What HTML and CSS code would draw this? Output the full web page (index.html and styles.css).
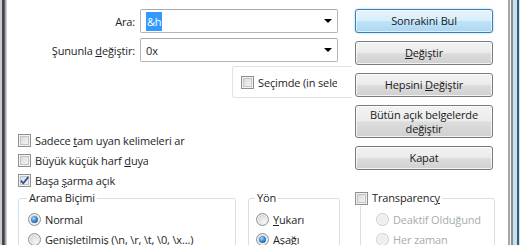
FILE: index.html
```html
<!DOCTYPE html>
<html>
<head>
<meta charset="utf-8">
<link rel="stylesheet" href="styles.css">
</head>
<body>
<div class="window">
  <div class="frame-left"></div>
  <div class="client">
    <div class="top">
      <div class="fields">
        <div class="field-row">
          <span class="lbl">Ara:</span>
          <div class="combo"><span class="val"><span class="sel">&amp;h</span></span><span class="arrow"></span></div>
        </div>
        <div class="field-row second">
          <span class="lbl">Şununla <u>d</u>eğiştir:</span>
          <div class="combo"><span class="val">0x</span><span class="arrow"></span></div>
        </div>
        <div class="selbox">
          <span class="cb"></span><span class="clip clip-sel">Seçimde (in selection)</span>
        </div>
        <div class="checks">
          <div class="check"><span class="cb"></span><span class="clip clip-1">Sadece <u>t</u>am uyan kelimeleri ara</span></div>
          <div class="check"><span class="cb"></span><span class="clip clip-2">Büyük küçük harf <u>d</u>uyarlı</span></div>
          <div class="check"><span class="cb checked"><svg width="11" height="11" viewBox="0 0 11 11"><path d="M1.8 5.6 L4.3 8.3 L9.4 1.9" fill="none" stroke="#2f4f8f" stroke-width="1.7"/></svg></span><span class="txt">Başa <u>ş</u>arma açık</span></div>
        </div>
      </div>
      <div class="buttons">
        <div class="btn default"><span>Sonrakini Bul</span></div>
        <div class="btn"><span><u>D</u>eğiştir</span></div>
        <div class="btn"><span>Hepsini <u>D</u>eğiştir</span></div>
        <div class="btn tall"><span>Bütün açık belgelerde<br>değiştir</span></div>
        <div class="btn"><span>Kapat</span></div>
      </div>
    </div>
    <div class="groups">
      <fieldset class="grp grp-mode">
        <legend>Arama Biçimi</legend>
        <div class="radio-row"><span class="rd on"></span><span>Normal</span></div>
        <div class="radio-row"><span class="rd"></span><span>Genişletilmiş (\n, \r, \t, \0, \x...)</span></div>
      </fieldset>
      <fieldset class="grp grp-dir">
        <legend>Yön</legend>
        <div class="radio-row"><span class="rd"></span><span><u>Y</u>ukarı</span></div>
        <div class="radio-row"><span class="rd on"></span><span>Aşağı</span></div>
      </fieldset>
      <fieldset class="grp grp-tr">
        <legend><span class="cb"></span><span>Transparenc<u>y</u></span></legend>
        <div class="radio-row dis"><span class="rd"></span><span class="clip clip-3">Deaktif Olduğunda</span></div>
        <div class="radio-row dis"><span class="rd"></span><span>Her zaman</span></div>
      </fieldset>
    </div>
  </div>
  <div class="frame-right"></div>
</div>
</body>
</html>
```
FILE: styles.css
```css
html, body {
  margin: 0;
  padding: 0;
  background: #ffffff;
}
body {
  width: 520px;
  height: 245px;
  overflow: hidden;
  font-family: "Open Sans", "Noto Sans", sans-serif;
  font-size: 11px;
  letter-spacing: -0.15px;
  color: #1e1e1e;
}
u { text-decoration: underline; text-underline-offset: 1px; }

.window {
  display: flex;
  height: 245px;
}
.frame-left {
  width: 7px;
  flex: none;
  background: linear-gradient(90deg, #c9cbcd 0, #c9cbcd 2px, #4a4d50 2px, #3a3c3e 4px, #8c9093 5px, #b9bcbe 6px, #dfe0e1 7px);
}
.frame-right {
  width: 12px;
  flex: none;
  background: linear-gradient(90deg, #a3a5a7 0, #a3a5a7 2px, #f4f4f4 2px, #f4f4f4 3px, #8a8d90 3px, #8a8d90 5px, #c8dff0 5px, #c8dff0 9px, #2e6272 9px, #2e6272 11px, #cde4ef 11px);
}
.client {
  flex: 1;
  background: #ffffff;
  padding-top: 9px;
}
.top {
  display: flex;
}
.fields {
  width: 345px;
  flex: none;
}
.field-row {
  display: flex;
  align-items: center;
  gap: 5px;
  height: 24px;
}
.field-row.second { margin-top: 5px; }
.lbl {
  width: 128px;
  text-align: right;
  white-space: nowrap;
}
.combo {
  width: 198px;
  height: 24px;
  box-sizing: border-box;
  border: 1px solid #b4b6bb;
  border-top-color: #a9abb0;
  border-radius: 2px;
  display: flex;
  align-items: center;
  padding: 0 5px 0 5px;
  background: #fff;
}
.val { flex: 1; }
.sel {
  background: #3399ff;
  color: #fff;
  padding: 2px 1px 2px 1px;
}
.arrow {
  width: 0;
  height: 0;
  border-left: 4px solid transparent;
  border-right: 4px solid transparent;
  border-top: 4px solid #000;
}
.selbox {
  margin: 4px 0 0 225px;
  width: 120px;
  height: 32px;
  box-sizing: border-box;
  border: 1px solid #dfe3e6;
  border-right: none;
  border-radius: 3px 0 0 3px;
  display: flex;
  align-items: center;
  padding-left: 8px;
  gap: 4px;
  overflow: hidden;
  box-shadow: inset 1px 1px 0 #fff;
}
.clip {
  white-space: nowrap;
  overflow: hidden;
}
.clip-sel { width: 79px; }
.clip-1 { width: 150px; }
.clip-2 { width: 113px; }
.clip-3 { width: 88px; }

.checks {
  margin: 32px 0 0 11px;
}
.check {
  display: flex;
  align-items: center;
  gap: 4px;
  height: 20px;
}
.cb {
  width: 13px;
  height: 13px;
  flex: none;
  box-sizing: border-box;
  border: 1px solid #8f8f8f;
  background: linear-gradient(135deg, #cfd1d4 0%, #e9eaeb 55%, #f7f7f7 100%);
  box-shadow: inset 0 0 0 1px #f2f2f2, inset 0 0 0 2px #c3c5c8;
  display: flex;
  align-items: center;
  justify-content: center;
}
.cb.checked { background: linear-gradient(135deg, #d6dde6 0%, #eef1f4 100%); }
.cb svg { display: block; }

.buttons {
  width: 138px;
  margin-left: 3px;
  display: flex;
  flex-direction: column;
  gap: 8px;
}
.btn {
  height: 24px;
  box-sizing: border-box;
  border: 1px solid #7a7a7a;
  border-radius: 3px;
  background: linear-gradient(#f3f3f3 0%, #ebebeb 48%, #dddddd 52%, #d0d0d0 100%);
  box-shadow: inset 0 0 0 1px rgba(255,255,255,0.75);
  display: flex;
  align-items: center;
  justify-content: center;
  text-align: center;
  line-height: 14px;
  color: #1a1a1a;
}
.btn.tall { height: 33px; }
.btn.default {
  border-color: #3c7fb1;
  background: linear-gradient(#e6f4fc 0%, #d7eefb 48%, #bfe3f8 52%, #aad7f2 100%);
  box-shadow: inset 0 0 0 1px rgba(255,255,255,0.6), 0 0 2px rgba(60,150,210,0.6);
}

.groups {
  display: flex;
  align-items: flex-start;
}
.grp {
  margin: 0;
  border: 1px solid #d5dfe5;
  border-radius: 3px;
  padding: 3px 8px 10px 9px;
  box-shadow: inset 1px 1px 0 #fff;
  height: 60px;
  box-sizing: border-box;
}
.grp legend {
  padding: 0 2px;
  margin-left: -1px;
  line-height: 16px;
  color: #1e1e1e;
}
.grp-mode {
  margin-left: 11px;
  width: 218px;
}
.grp-dir {
  margin-left: 12px;
  width: 92px;
  padding-left: 7px;
}
.grp-tr {
  margin-left: 20px;
  width: 135px;
  padding-left: 15px;
}
.grp-tr legend {
  display: flex;
  align-items: center;
  gap: 4px;
  margin-left: -21px;
  padding: 0 2px 0 0;
  background: #fff;
}
.radio-row {
  display: flex;
  align-items: center;
  gap: 4px;
  height: 20px;
}
.rd {
  width: 13px;
  height: 13px;
  flex: none;
  box-sizing: border-box;
  border-radius: 50%;
  border: 1px solid #8e9094;
  background: radial-gradient(circle at 65% 70%, #f6f6f6 0%, #dcdcdc 60%, #c9cacc 100%);
  box-shadow: inset 0 0 0 1px #f0f0f0;
  display: flex;
  align-items: center;
  justify-content: center;
}
.rd.on::after {
  content: "";
  width: 7px;
  height: 7px;
  border-radius: 50%;
  background: radial-gradient(circle at 40% 35%, #a8dbff 0%, #3a8ad4 45%, #123f86 100%);
}
.radio-row.dis { color: #a7acb0; }
.radio-row.dis .rd {
  border-color: #c8cacc;
  background: #eeeeee;
  box-shadow: inset 0 0 0 1px #f8f8f8;
}
```
